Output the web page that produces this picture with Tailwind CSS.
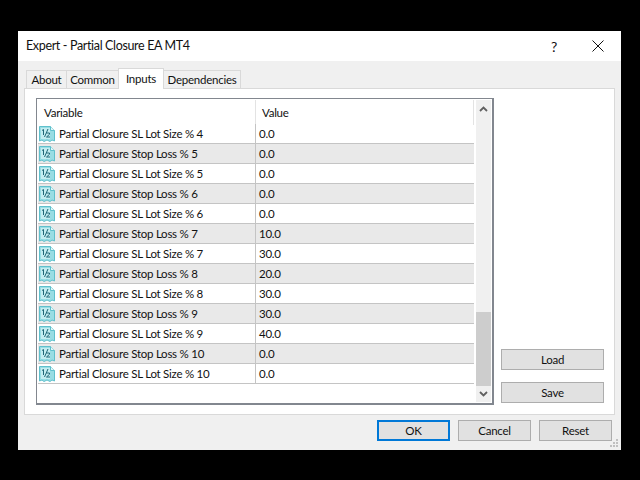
<!DOCTYPE html>
<html><head><meta charset="utf-8">
<script src="https://cdn.jsdelivr.net/npm/@tailwindcss/browser@4"></script>
</head>
<body class="w-[640px] h-[480px] bg-black overflow-hidden font-['Lato','Noto_Sans',sans-serif] text-[11.5px] tracking-[-0.25px] text-[#111]">
<svg width="0" height="0" class="absolute"><defs>
<g id="v">
<path d="M0.5 0.5H11.5L15.5 4.5V15L13 14L11 15.5L8 14L5 15.5L3 14L0.5 15Z" fill="#98dde4" stroke="#5fc0cc"/>
<path d="M11.5 0.5V4.5H15.5" fill="#e4f7f8" stroke="#5fc0cc"/>
<path d="M2 2H11V13H2Z" fill="#c4edf1"/>
<path d="M3 4.5L4.5 3.5V9M5.5 11L9 3M7.5 7H10.5V8.3L7.5 11H11" fill="none" stroke="#1f6676" stroke-width="1"/>
</g></defs></svg>
<div class="flex flex-col w-[603px] h-[419px] mt-[31px] ml-[18px] bg-[#f0f0f0] relative">
  <div class="h-[30px] bg-white flex items-center pl-[8px] shrink-0">
    <span class="text-[12.5px] tracking-[-0.35px]">Expert - Partial Closure EA MT4</span>
    <span class="ml-auto text-[14px] mr-[34px]">?</span>
    <svg width="14" height="14" class="mr-[16px]" viewBox="0 0 14 14"><path d="M1.5 1.5L12.5 12.5M12.5 1.5L1.5 12.5" stroke="#111" stroke-width="1"/></svg>
  </div>
  <div class="flex h-[19px] mt-[8px] pl-[8px] shrink-0 relative z-10 items-end">
    <div class="h-[18px] w-[41px] border border-[#d9d9d9] border-b-0 flex items-center justify-center">About</div>
    <div class="h-[18px] w-[53px] -ml-px border border-[#d9d9d9] border-b-0 flex items-center justify-center">Common</div>
    <div class="h-[21px] w-[46px] -ml-px -mb-px bg-white border border-[#d9d9d9] border-b-0 flex items-start pt-[1px] justify-center">Inputs</div>
    <div class="h-[18px] w-[78px] -ml-px border border-[#d9d9d9] border-b-0 flex items-center justify-center">Dependencies</div>
  </div>
  <div class="mx-[6px] h-[327px] bg-white border border-[#d9d9d9] shrink-0 flex pl-[11px] pt-[9px] pb-[8px]">
    <div class="w-[458px] h-[307px] border border-[#82878f] border-r-2 border-b-2 flex p-[1px] shrink-0">
      <div class="w-[436px] flex flex-col">
        <div class="flex h-[25px] shrink-0 items-center">
          <div class="w-[217px] pl-[6px]">Variable</div>
          <div class="w-px h-full bg-[#e3e3e3]"></div>
          <div class="pl-[6px] grow">Value</div>
          <div class="w-px h-full bg-[#e3e3e3]"></div>
        </div>
        <div class="flex flex-col">
          <div class="flex h-[20px] border-b border-[#c4c4c4] items-center -mt-[1px]"><svg width="16" height="16" viewBox="0 0 16 16" class="ml-[1px]"><use href="#v"/></svg><div class="w-[200px] pl-[4px]">Partial Closure SL Lot Size % 4</div><div class="w-px h-full bg-[#c4c4c4]"></div><div class="pl-[3px]">0.0</div></div>
          <div class="flex h-[20px] border-b border-[#c4c4c4] bg-[#e9e9e9] items-center"><svg width="16" height="16" viewBox="0 0 16 16" class="ml-[1px]"><use href="#v"/></svg><div class="w-[200px] pl-[4px]">Partial Closure Stop Loss % 5</div><div class="w-px h-full bg-[#c4c4c4]"></div><div class="pl-[3px]">0.0</div></div>
          <div class="flex h-[20px] border-b border-[#c4c4c4] items-center"><svg width="16" height="16" viewBox="0 0 16 16" class="ml-[1px]"><use href="#v"/></svg><div class="w-[200px] pl-[4px]">Partial Closure SL Lot Size % 5</div><div class="w-px h-full bg-[#c4c4c4]"></div><div class="pl-[3px]">0.0</div></div>
          <div class="flex h-[20px] border-b border-[#c4c4c4] bg-[#e9e9e9] items-center"><svg width="16" height="16" viewBox="0 0 16 16" class="ml-[1px]"><use href="#v"/></svg><div class="w-[200px] pl-[4px]">Partial Closure Stop Loss % 6</div><div class="w-px h-full bg-[#c4c4c4]"></div><div class="pl-[3px]">0.0</div></div>
          <div class="flex h-[20px] border-b border-[#c4c4c4] items-center"><svg width="16" height="16" viewBox="0 0 16 16" class="ml-[1px]"><use href="#v"/></svg><div class="w-[200px] pl-[4px]">Partial Closure SL Lot Size % 6</div><div class="w-px h-full bg-[#c4c4c4]"></div><div class="pl-[3px]">0.0</div></div>
          <div class="flex h-[20px] border-b border-[#c4c4c4] bg-[#e9e9e9] items-center"><svg width="16" height="16" viewBox="0 0 16 16" class="ml-[1px]"><use href="#v"/></svg><div class="w-[200px] pl-[4px]">Partial Closure Stop Loss % 7</div><div class="w-px h-full bg-[#c4c4c4]"></div><div class="pl-[3px]">10.0</div></div>
          <div class="flex h-[20px] border-b border-[#c4c4c4] items-center"><svg width="16" height="16" viewBox="0 0 16 16" class="ml-[1px]"><use href="#v"/></svg><div class="w-[200px] pl-[4px]">Partial Closure SL Lot Size % 7</div><div class="w-px h-full bg-[#c4c4c4]"></div><div class="pl-[3px]">30.0</div></div>
          <div class="flex h-[20px] border-b border-[#c4c4c4] bg-[#e9e9e9] items-center"><svg width="16" height="16" viewBox="0 0 16 16" class="ml-[1px]"><use href="#v"/></svg><div class="w-[200px] pl-[4px]">Partial Closure Stop Loss % 8</div><div class="w-px h-full bg-[#c4c4c4]"></div><div class="pl-[3px]">20.0</div></div>
          <div class="flex h-[20px] border-b border-[#c4c4c4] items-center"><svg width="16" height="16" viewBox="0 0 16 16" class="ml-[1px]"><use href="#v"/></svg><div class="w-[200px] pl-[4px]">Partial Closure SL Lot Size % 8</div><div class="w-px h-full bg-[#c4c4c4]"></div><div class="pl-[3px]">30.0</div></div>
          <div class="flex h-[20px] border-b border-[#c4c4c4] bg-[#e9e9e9] items-center"><svg width="16" height="16" viewBox="0 0 16 16" class="ml-[1px]"><use href="#v"/></svg><div class="w-[200px] pl-[4px]">Partial Closure Stop Loss % 9</div><div class="w-px h-full bg-[#c4c4c4]"></div><div class="pl-[3px]">30.0</div></div>
          <div class="flex h-[20px] border-b border-[#c4c4c4] items-center"><svg width="16" height="16" viewBox="0 0 16 16" class="ml-[1px]"><use href="#v"/></svg><div class="w-[200px] pl-[4px]">Partial Closure SL Lot Size % 9</div><div class="w-px h-full bg-[#c4c4c4]"></div><div class="pl-[3px]">40.0</div></div>
          <div class="flex h-[20px] border-b border-[#c4c4c4] bg-[#e9e9e9] items-center"><svg width="16" height="16" viewBox="0 0 16 16" class="ml-[1px]"><use href="#v"/></svg><div class="w-[200px] pl-[4px]">Partial Closure Stop Loss % 10</div><div class="w-px h-full bg-[#c4c4c4]"></div><div class="pl-[3px]">0.0</div></div>
          <div class="flex h-[20px] border-b border-[#c4c4c4] items-center"><svg width="16" height="16" viewBox="0 0 16 16" class="ml-[1px]"><use href="#v"/></svg><div class="w-[200px] pl-[4px]">Partial Closure SL Lot Size % 10</div><div class="w-px h-full bg-[#c4c4c4]"></div><div class="pl-[3px]">0.0</div></div>
        </div>
      </div>
      <div class="w-[15px] ml-auto bg-[#f0f0f0] flex flex-col">
        <div class="h-[17px] flex items-center justify-center"><svg width="9" height="6" viewBox="0 0 9 6"><path d="M1 5L4.5 1.5L8 5" fill="none" stroke="#606060" stroke-width="1.8"/></svg></div>
        <div class="h-[195px]"></div>
        <div class="h-[74px] bg-[#cdcdcd]"></div>
        <div class="h-[16px] flex items-center justify-center"><svg width="9" height="6" viewBox="0 0 9 6"><path d="M1 1L4.5 4.5L8 1" fill="none" stroke="#606060" stroke-width="1.8"/></svg></div>
      </div>
    </div>
    <div class="flex flex-col ml-[7px] mt-[251px] gap-[12px]">
      <div class="w-[103px] h-[21px] pt-[1px] bg-[#e1e1e1] border border-[#adadad] flex items-center justify-center">Load</div>
      <div class="w-[103px] h-[21px] pt-[1px] bg-[#e1e1e1] border border-[#adadad] flex items-center justify-center">Save</div>
    </div>
  </div>
  <div class="flex justify-end gap-[8px] pr-[9px] mt-[5px]">
    <div class="w-[73px] h-[21px] pt-[1px] bg-[#e1e1e1] border-2 border-[#0078d7] flex items-center justify-center">OK</div>
    <div class="w-[73px] h-[21px] pt-[1px] bg-[#e1e1e1] border border-[#adadad] flex items-center justify-center">Cancel</div>
    <div class="w-[73px] h-[21px] pt-[1px] bg-[#e1e1e1] border border-[#adadad] flex items-center justify-center">Reset</div>
  </div>
  <svg width="9" height="9" viewBox="0 0 9 9" class="absolute right-[2px] bottom-[2px]"><path d="M6 0h2v2h-2zM3 3h2v2h-2zM6 3h2v2h-2zM0 6h2v2h-2zM3 6h2v2h-2zM6 6h2v2h-2z" fill="#c0c0c0"/></svg>
</div>
</body></html>
